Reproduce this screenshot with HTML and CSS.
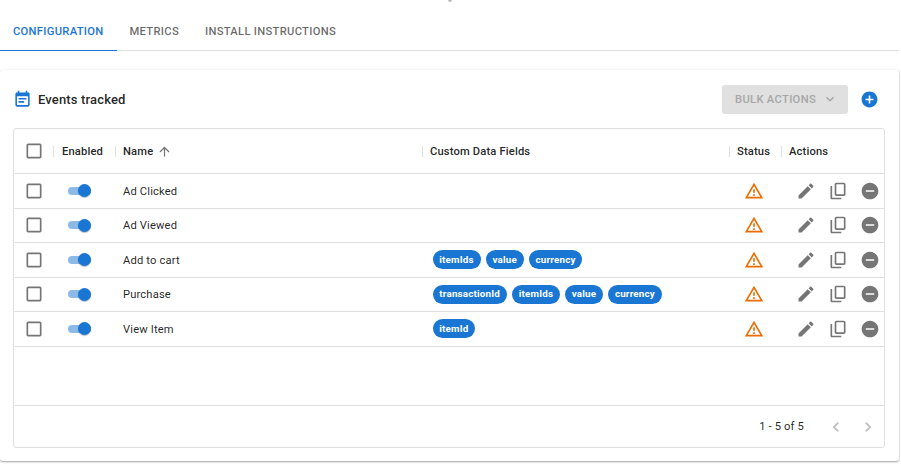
FILE: index.html
```html
<!DOCTYPE html>
<html lang="en">
<head>
	<meta charset="utf-8">
	<title>Events tracked</title>
	<link rel="stylesheet" href="styles.css">
</head>
<body>
<svg class="defs" width="0" height="0">
	<symbol id="i-box" viewBox="0 0 24 24"><path d="M19 5v14H5V5h14m0-2H5c-1.1 0-2 .9-2 2v14c0 1.1.9 2 2 2h14c1.1 0 2-.9 2-2V5c0-1.1-.9-2-2-2z"/></symbol>
	<symbol id="i-warn" viewBox="0 0 24 24"><path d="M12 5.99L19.53 19H4.47L12 5.99M12 2L1 21h22L12 2zm1 14h-2v2h2v-2zm0-6h-2v4h2v-4z"/></symbol>
	<symbol id="i-edit" viewBox="0 0 24 24"><path d="M3 17.25V21h3.75L17.81 9.94l-3.75-3.75L3 17.25zM20.71 7.04c.39-.39.39-1.02 0-1.41l-2.34-2.34c-.39-.39-1.02-.39-1.41 0l-1.83 1.83 3.75 3.75 1.83-1.83z"/></symbol>
	<symbol id="i-copy" viewBox="0 0 24 24"><path d="M5 6H3v14c0 1.1.9 2 2 2h11v-2H5V6zm14-4h-9c-1.1 0-2 .9-2 2v12c0 1.1.9 2 2 2h9c1.1 0 2-.9 2-2V4c0-1.1-.9-2-2-2zm0 14h-9V4h9v12z"/></symbol>
	<symbol id="i-remove" viewBox="0 0 24 24"><path d="M12 2C6.48 2 2 6.48 2 12s4.48 10 10 10 10-4.48 10-10S17.52 2 12 2zm5 11H7v-2h10v2z"/></symbol>
</svg>

<span class="top-dot"></span>

<nav class="tabs">
	<a class="tab active">CONFIGURATION</a>
	<a class="tab">METRICS</a>
	<a class="tab">INSTALL INSTRUCTIONS</a>
</nav>

<section class="card">
	<header class="card-head">
		<svg class="title-icon" viewBox="0 0 24 24"><path d="M17 10H7v2h10v-2zm2-7h-1V1h-2v2H8V1H6v2H5c-1.11 0-1.99.9-1.99 2L3 19c0 1.1.89 2 2 2h14c1.1 0 2-.9 2-2V5c0-1.1-.9-2-2-2zm0 16H5V8h14v11zm-5-5H7v2h7v-2z"/></svg>
		<h2>Events tracked</h2>
		<button class="bulk" disabled>BULK ACTIONS
			<svg viewBox="0 0 24 24"><path d="M16.59 8.59L12 13.17 7.41 8.59 6 10l6 6 6-6z"/></svg>
		</button>
		<svg class="add" viewBox="0 0 24 24"><path d="M12 2C6.48 2 2 6.48 2 12s4.48 10 10 10 10-4.48 10-10S17.52 2 12 2zm5 11h-4v4h-2v-4H7v-2h4V7h2v4h4v2z"/></svg>
	</header>

	<div class="grid">
		<div class="row head">
			<div class="cell check"><svg class="box"><use href="#i-box"/></svg></div>
			<div class="cell sep enabled">Enabled</div>
			<div class="cell sep">Name
				<svg class="sort" viewBox="0 0 24 24"><path d="M4 12l1.41 1.41L11 7.83V20h2V7.83l5.58 5.59L20 12l-8-8-8 8z"/></svg>
			</div>
			<div class="cell sep">Custom Data Fields</div>
			<div class="cell sep">Status</div>
			<div class="cell sep">Actions</div>
		</div>

		<div class="row">
			<div class="cell check"><svg class="box"><use href="#i-box"/></svg></div>
			<div class="cell toggle-cell"><span class="toggle"></span></div>
			<div class="cell name">Ad Clicked</div>
			<div class="cell"></div>
			<div class="cell status"><svg class="warn"><use href="#i-warn"/></svg></div>
			<div class="cell actions"><svg><use href="#i-edit"/></svg><svg><use href="#i-copy"/></svg><svg><use href="#i-remove"/></svg></div>
		</div>
		<div class="row">
			<div class="cell check"><svg class="box"><use href="#i-box"/></svg></div>
			<div class="cell toggle-cell"><span class="toggle"></span></div>
			<div class="cell name">Ad Viewed</div>
			<div class="cell"></div>
			<div class="cell status"><svg class="warn"><use href="#i-warn"/></svg></div>
			<div class="cell actions"><svg><use href="#i-edit"/></svg><svg><use href="#i-copy"/></svg><svg><use href="#i-remove"/></svg></div>
		</div>
		<div class="row">
			<div class="cell check"><svg class="box"><use href="#i-box"/></svg></div>
			<div class="cell toggle-cell"><span class="toggle"></span></div>
			<div class="cell name">Add to cart</div>
			<div class="cell chips"><span class="chip">itemIds</span><span class="chip">value</span><span class="chip">currency</span></div>
			<div class="cell status"><svg class="warn"><use href="#i-warn"/></svg></div>
			<div class="cell actions"><svg><use href="#i-edit"/></svg><svg><use href="#i-copy"/></svg><svg><use href="#i-remove"/></svg></div>
		</div>
		<div class="row">
			<div class="cell check"><svg class="box"><use href="#i-box"/></svg></div>
			<div class="cell toggle-cell"><span class="toggle"></span></div>
			<div class="cell name">Purchase</div>
			<div class="cell chips"><span class="chip">transactionId</span><span class="chip">itemIds</span><span class="chip">value</span><span class="chip">currency</span></div>
			<div class="cell status"><svg class="warn"><use href="#i-warn"/></svg></div>
			<div class="cell actions"><svg><use href="#i-edit"/></svg><svg><use href="#i-copy"/></svg><svg><use href="#i-remove"/></svg></div>
		</div>
		<div class="row">
			<div class="cell check"><svg class="box"><use href="#i-box"/></svg></div>
			<div class="cell toggle-cell"><span class="toggle"></span></div>
			<div class="cell name">View Item</div>
			<div class="cell chips"><span class="chip">itemId</span></div>
			<div class="cell status"><svg class="warn"><use href="#i-warn"/></svg></div>
			<div class="cell actions"><svg><use href="#i-edit"/></svg><svg><use href="#i-copy"/></svg><svg><use href="#i-remove"/></svg></div>
		</div>

		<div class="filler"></div>

		<footer class="pager">
			<span>1 - 5 of 5</span>
			<svg viewBox="0 0 24 24"><path d="M15.41 7.41L14 6l-6 6 6 6 1.41-1.41L10.83 12z"/></svg>
			<svg viewBox="0 0 24 24"><path d="M10 6L8.59 7.41 13.17 12l-4.58 4.59L10 18l6-6z"/></svg>
		</footer>
	</div>
</section>
</body>
</html>
```

FILE: styles.css
```css
html,
body {
	margin: 0;
	height: 466px;
	overflow: hidden;
}

body {
	position: relative;
	width: 901px;
	background: #fff;
	color: rgba(0, 0, 0, .87);
	font-family: Roboto, sans-serif;
	font-size: 11.2px;
	letter-spacing: .15px;
}

.defs {
	position: absolute;
}

.top-dot {
	position: absolute;
	top: -2px;
	left: 448px;
	width: 4px;
	height: 4px;
	border-radius: 50%;
	background: #bdbdbd;
}

/* tabs */
.tabs {
	display: flex;
	width: 899px;
	height: 38px;
	padding-top: 12px;
	border-bottom: 1px solid #e0e0e0;
}

.tab {
	display: flex;
	align-items: center;
	padding: 0 13px;
	font-weight: 500;
	letter-spacing: .3px;
	color: rgba(0, 0, 0, .6);
}

.tab.active {
	margin-bottom: -1px;
	color: #1976d2;
	border-bottom: 1px solid #1976d2;
}

/* card */
.card {
	width: 899px;
	height: 391px;
	margin-top: 19px;
	padding: 0 14px 0 13px;
	box-sizing: border-box;
	border-radius: 3px;
	box-shadow: 0 1px 2px rgba(0, 0, 0, .35), 0 0 3px rgba(0, 0, 0, .06);
}

.card-head {
	display: flex;
	align-items: center;
	height: 58px;
}

.title-icon {
	width: 19px;
	height: 19px;
	margin-right: 6px;
	fill: #1976d2;
}

h2 {
	flex: 1;
	margin: 0;
	font-size: 13px;
	font-weight: 500;
}

.bulk {
	display: flex;
	align-items: center;
	width: 126px;
	height: 29px;
	margin-right: 12px;
	padding: 0 0 0 13px;
	border: 0;
	border-radius: 3px;
	background: #e0e0e0;
	color: #a6a6a6;
	font: 500 11.2px Roboto, sans-serif;
	letter-spacing: .32px;
}

.bulk svg {
	width: 16px;
	height: 16px;
	margin-left: 6px;
	fill: #a6a6a6;
}

.add {
	width: 19px;
	height: 19px;
	margin-right: 6px;
	fill: #1976d2;
}

/* table */
.grid {
	display: flex;
	flex-direction: column;
	width: 872px;
	height: 320px;
	box-sizing: border-box;
	border: 1px solid #e0e0e0;
	border-radius: 3px;
}

.row {
	display: grid;
	grid-template-columns: 39px 62px 307px 307px 52px 103px;
	align-items: center;
	flex: none;
	height: 34.5px;
	box-sizing: border-box;
	border-bottom: 1px solid #e0e0e0;
}

.row.head {
	height: 45px;
	font-weight: 500;
}

.cell {
	display: flex;
	align-items: center;
	padding-left: 8px;
	height: 100%;
	box-sizing: border-box;
}

.name {
	padding-top: .6px;
}

.check {
	padding-left: 9.5px;
}

.box {
	width: 20px;
	height: 20px;
	fill: #757575;
}

.sep {
	position: relative;
}

.sep.enabled {
	padding-left: 9px;
}

.sep::before {
	content: "";
	position: absolute;
	left: 0;
	top: 50%;
	width: 1px;
	height: 11px;
	margin-top: -5px;
	background: #e0e0e0;
}

.sort {
	width: 15px;
	height: 15px;
	margin-left: 4px;
	fill: #757575;
}

.toggle-cell {
	padding-left: 15px;
}

.toggle {
	position: relative;
	width: 23px;
	height: 8px;
	border-radius: 4px;
	background: #8bb9e8;
}

.toggle::after {
	content: "";
	position: absolute;
	right: 0;
	top: -2.5px;
	width: 13px;
	height: 13px;
	border-radius: 50%;
	background: #1976d2;
	box-shadow: 0 1px 1px rgba(0, 0, 0, .25);
}

.chips {
	gap: 5px;
	padding-left: 10.5px;
}

.chip {
	display: flex;
	align-items: center;
	height: 19px;
	box-sizing: border-box;
	padding: 0 6.8px 1px;
	border-radius: 10px;
	background: #1976d2;
	color: #fff;
	font-size: 9.8px;
	font-weight: 700;
	letter-spacing: .2px;
}

.status {
	padding-left: 15px;
}

.warn {
	width: 20px;
	height: 20px;
	fill: #ed6c02;
}

.actions {
	gap: 12px;
	padding-left: 15px;
}

.actions svg {
	width: 20px;
	height: 20px;
	fill: #757575;
}

.filler {
	flex: 1;
	border-bottom: 1px solid #e0e0e0;
}

.pager {
	display: flex;
	align-items: center;
	justify-content: flex-end;
	flex: none;
	height: 41px;
	padding-right: 6px;
	gap: 12px;
}

.pager span {
	margin-right: 10px;
}

.pager svg {
	width: 20px;
	height: 20px;
	fill: #bdbdbd;
}
```
